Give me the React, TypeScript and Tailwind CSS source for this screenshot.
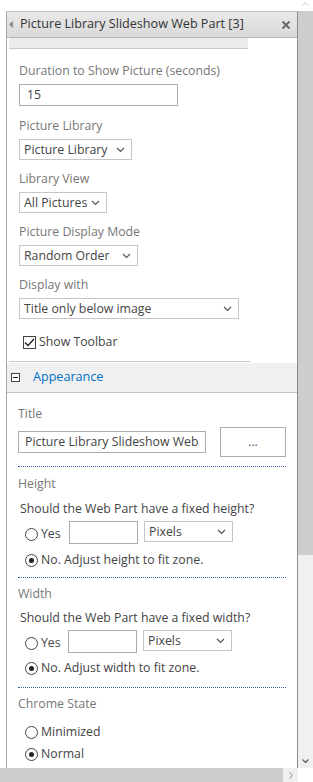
import React from "react";

const font = { fontFamily: '"Open Sans", "Noto Sans", sans-serif' };

function Chevron() {
  return (
    <svg width="9" height="6" viewBox="0 0 9 6" className="shrink-0">
      <polyline points="1,1 4.5,4.5 8,1" fill="none" stroke="#555" strokeWidth="1.2" />
    </svg>
  );
}

function Select({ label, w }: { label: string; w: string }) {
  return (
    <div className={`flex h-[21px] items-center justify-between border border-[#c6c6c6] bg-white pl-[4px] pr-[6px] text-[12.3px] leading-[16px] text-[#444] ${w}`}>
      <span>{label}</span>
      <Chevron />
    </div>
  );
}

function Radio({ checked, label, w = "" }: { checked?: boolean; label: string; w?: string }) {
  return (
    <div className="flex h-[16px] items-center text-[12.3px] leading-[16px] text-[#444]">
      <span className="ml-[18px] mr-[3px] flex h-[13px] w-[13px] shrink-0 items-center justify-center rounded-full border border-[#444] bg-white">
        {checked && <span className="h-[5px] w-[5px] rounded-full bg-[#222]" />}
      </span>
      <span className={w}>{label}</span>
    </div>
  );
}

function Label({ text, className = "" }: { text: string; className?: string }) {
  return <div className={`h-[16px] text-[12.3px] leading-[16px] text-[#777] ${className}`}>{text}</div>;
}

function Dotted({ className = "" }: { className?: string }) {
  return <div className={`ml-[11px] w-[268px] border-t border-dotted border-[#3b5ea8] ${className}`} />;
}

function Question({ text, className = "" }: { text: string; className?: string }) {
  return <div className={`ml-[13px] h-[16px] text-[12.3px] leading-[16px] text-[#444] ${className}`}>{text}</div>;
}

function SizeRow({ yesW }: { yesW: string }) {
  return (
    <div className="flex items-start">
      <div className="mt-[5px]">
        <Radio label="Yes" w={yesW} />
      </div>
      <div className="h-[23px] w-[69px] border border-[#ababab] bg-white" />
      <div className="ml-[6px]">
        <Select label="Pixels" w="w-[89px]" />
      </div>
    </div>
  );
}

export default function App() {
  return (
    <div className="relative h-[782px] w-[313px] overflow-hidden bg-white" style={font}>
      <div className="flex h-[768px]">
        {/* content column */}
        <div className="w-[298px] pl-[6px] pt-[11px]">
          <div className="h-[757px] border-x border-t border-l-[#a6a6a6] border-r-[#8a8a8a] border-t-[#c6c6c6]">
            {/* header */}
            <div className="flex h-[26px] items-center border-b border-[#b8b8b8] bg-gradient-to-b from-[#e9e9e9] to-[#d9d9d9] pl-[2px] pr-[5px]">
              <svg width="5" height="7" viewBox="0 0 5 7" className="mr-[6px]">
                <polygon points="4,0 0,3.5 4,7" fill="#8a8a8a" />
              </svg>
              <span className="flex-1 text-[12.6px] text-[#333]">Picture Library Slideshow Web Part [3]</span>
              <svg width="10" height="10" viewBox="0 0 10 10" className="mr-[1px]">
                <path d="M1.5 1.5 L8.5 8.5 M8.5 1.5 L1.5 8.5" stroke="#6b6b6b" strokeWidth="2" />
              </svg>
            </div>
            {/* gray bar */}
            <div className="ml-[2px] h-[11px] w-[239px] border-b border-[#c9c9c9] bg-[#ebebeb]" />

            <div className="pl-[12px]">
              <Label text="Duration to Show Picture (seconds)" className="mt-[14px]" />
              <div className="mt-[5px] flex h-[22px] w-[159px] items-center border border-[#ababab] pl-[7px] text-[12.3px] text-[#444]">
                15
              </div>
              <Label text="Picture Library" className="mt-[12px]" />
              <div className="mt-[5px]">
                <Select label="Picture Library" w="w-[113px]" />
              </div>
              <Label text="Library View" className="mt-[11px]" />
              <div className="mt-[5px]">
                <Select label="All Pictures" w="w-[88px]" />
              </div>
              <Label text="Picture Display Mode" className="mt-[11px]" />
              <div className="mt-[5px]">
                <Select label="Random Order" w="w-[119px]" />
              </div>
              <Label text="Display with" className="mt-[11px]" />
              <div className="mt-[5px]">
                <Select label="Title only below image" w="w-[220px]" />
              </div>
              <div className="mt-[15px] flex h-[16px] items-center text-[12.3px] leading-[16px] text-[#444]">
                <span className="ml-[4px] mr-[3px] flex h-[13px] w-[13px] items-center justify-center border border-[#444] bg-white">
                  <svg width="11" height="9" viewBox="0 0 11 9">
                    <polyline points="1,4.5 4,7.5 10,1" fill="none" stroke="#222" strokeWidth="1.3" />
                  </svg>
                </span>
                <span>Show Toolbar</span>
              </div>
            </div>
            <div className="ml-[2px] mt-[11px] w-[241px] border-t border-[#c6c6c6]" />

            {/* appearance header */}
            <div className="mt-[1px] flex h-[30px] items-center border-b border-[#c6c6c6] bg-[#f0f0f0] pl-[4px]">
              <span className="flex h-[9px] w-[9px] items-center justify-center border border-[#444] bg-white">
                <span className="h-[1px] w-[5px] bg-[#222]" />
              </span>
              <span className="ml-[13px] text-[12.6px] text-[#0072c6]">Appearance</span>
            </div>

            <div>
              <Label text="Title" className="ml-[11px] mt-[13px]" />
              <div className="ml-[11px] mt-[5px] flex items-start">
                <div className="mt-[4px] flex h-[22px] w-[188px] items-center overflow-hidden whitespace-nowrap border border-[#ababab] pl-[6px] text-[12.3px] text-[#444]">
                  Picture Library Slideshow Web
                </div>
                <div className="ml-[14px] flex h-[30px] w-[66px] items-center justify-center border border-[#ababab] bg-white text-[12px] text-[#444]">
                  ...
                </div>
              </div>
              <Dotted className="mt-[9px]" />
              <Label text="Height" className="ml-[11px] mt-[9px]" />
              <Question text="Should the Web Part have a fixed height?" className="mt-[9px]" />
              <div className="mt-[4px]">
                <SizeRow yesW="w-[28px]" />
              </div>
              <div className="mt-[8px]">
                <Radio checked label="No. Adjust height to fit zone." />
              </div>
              <Dotted className="mt-[9px]" />
              <Label text="Width" className="ml-[11px] mt-[8px]" />
              <Question text="Should the Web Part have a fixed width?" className="mt-[8px]" />
              <div className="mt-[4px]">
                <SizeRow yesW="w-[27px]" />
              </div>
              <div className="mt-[7px]">
                <Radio checked label="No. Adjust width to fit zone." />
              </div>
              <Dotted className="mt-[11px]" />
              <Label text="Chrome State" className="ml-[11px] mt-[8px]" />
              <div className="mt-[12px]">
                <Radio label="Minimized" />
              </div>
              <div className="mt-[6px]">
                <Radio checked label="Normal" />
              </div>
            </div>
          </div>
        </div>
        {/* vertical scrollbar */}
        <div className="flex w-[15px] flex-col bg-[#f0f0f0]">
          <div className="flex h-[11px] items-start justify-center bg-white pt-[2px]">
            <svg width="7" height="4" viewBox="0 0 7 4">
              <polyline points="0.5,3.5 3.5,0.5 6.5,3.5" fill="none" stroke="#e0e0e0" strokeWidth="1.2" />
            </svg>
          </div>
          <div className="h-[544px] bg-[#cdcdcd]" />
          <div className="flex-1" />
          <div className="flex h-[14px] items-center justify-center">
            <svg width="7" height="4" viewBox="0 0 7 4">
              <polyline points="0.5,0.5 3.5,3.5 6.5,0.5" fill="none" stroke="#606060" strokeWidth="1.3" />
            </svg>
          </div>
        </div>
      </div>
      {/* horizontal scrollbar */}
      <div className="flex h-[14px]">
        <div className="flex w-[298px] bg-[#f0f0f0]">
          <div className="w-[283px] bg-[#cdcdcd]" />
          <div className="flex flex-1 items-center justify-center">
            <svg width="4" height="7" viewBox="0 0 4 7">
              <polyline points="0.5,0.5 3.5,3.5 0.5,6.5" fill="none" stroke="#b0b0b0" strokeWidth="1.2" />
            </svg>
          </div>
        </div>
        <div className="flex-1 bg-white" />
      </div>
    </div>
  );
}
